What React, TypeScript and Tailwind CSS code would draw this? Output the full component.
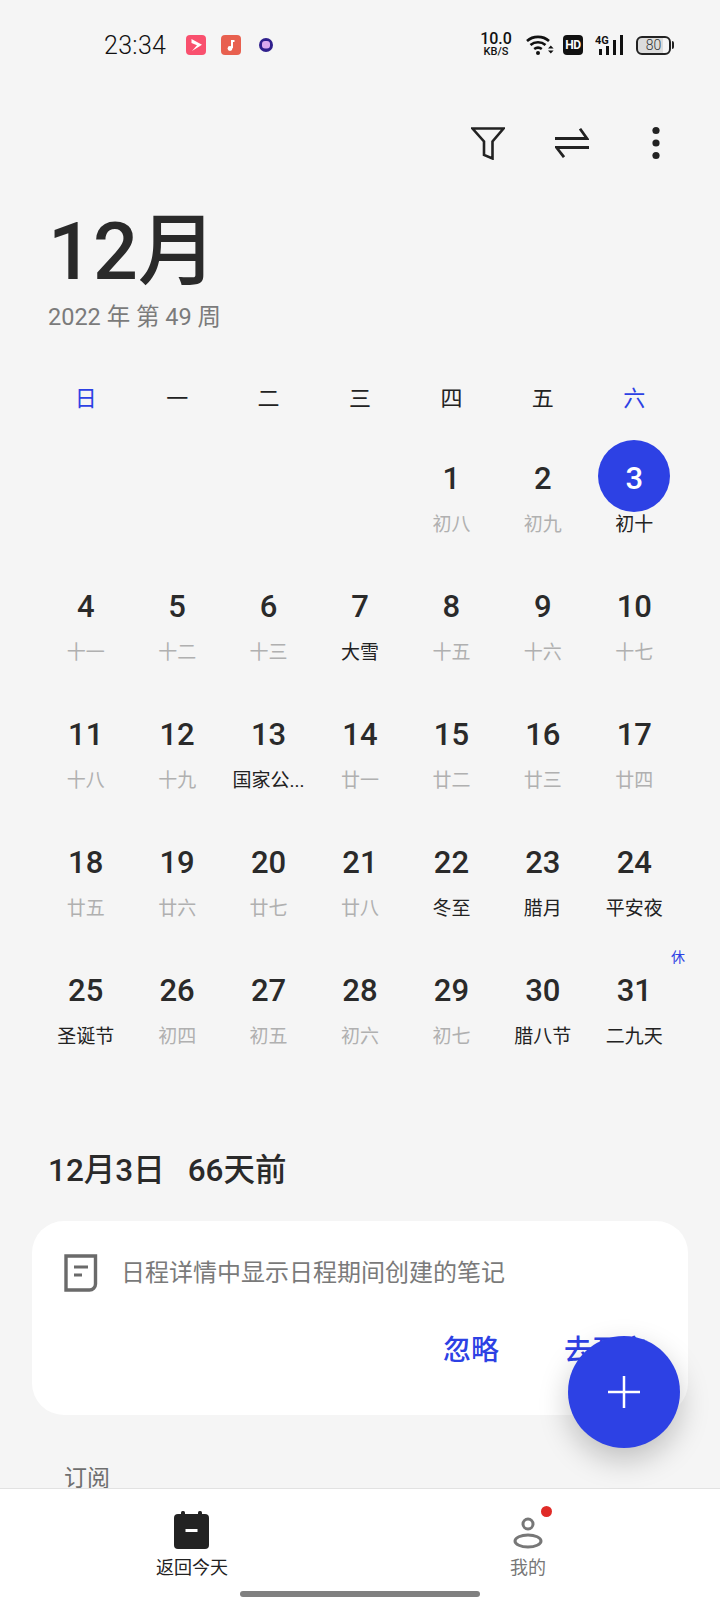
const font = "font-['Roboto','Noto_Sans_CJK_SC',sans-serif]";

const weekDays = ["日", "一", "二", "三", "四", "五", "六"];

type Day = { n: number; lunar: string; mark?: boolean };

const days: Day[] = [
  { n: 1, lunar: "初八" },
  { n: 2, lunar: "初九" },
  { n: 3, lunar: "初十", mark: true },
  { n: 4, lunar: "十一" },
  { n: 5, lunar: "十二" },
  { n: 6, lunar: "十三" },
  { n: 7, lunar: "大雪", mark: true },
  { n: 8, lunar: "十五" },
  { n: 9, lunar: "十六" },
  { n: 10, lunar: "十七" },
  { n: 11, lunar: "十八" },
  { n: 12, lunar: "十九" },
  { n: 13, lunar: "国家公...", mark: true },
  { n: 14, lunar: "廿一" },
  { n: 15, lunar: "廿二" },
  { n: 16, lunar: "廿三" },
  { n: 17, lunar: "廿四" },
  { n: 18, lunar: "廿五" },
  { n: 19, lunar: "廿六" },
  { n: 20, lunar: "廿七" },
  { n: 21, lunar: "廿八" },
  { n: 22, lunar: "冬至", mark: true },
  { n: 23, lunar: "腊月", mark: true },
  { n: 24, lunar: "平安夜", mark: true },
  { n: 25, lunar: "圣诞节", mark: true },
  { n: 26, lunar: "初四" },
  { n: 27, lunar: "初五" },
  { n: 28, lunar: "初六" },
  { n: 29, lunar: "初七" },
  { n: 30, lunar: "腊八节", mark: true },
  { n: 31, lunar: "二九天", mark: true },
];

function StatusBar() {
  return (
    <div className="flex h-[90px] items-center pl-[104px] pr-[46px] text-[#111]">
      <span className="w-[62px] text-[25px] font-light leading-none tracking-[0.3px] font-['Roboto',sans-serif]">23:34</span>
      <div className="ml-[20px] flex items-center gap-[15px]">
        <svg width="20" height="20" viewBox="0 0 20 20">
          <rect width="20" height="20" rx="4" fill="#f9506e" />
          <path d="M5.500 4 16 9.800 6 16 11 10.200 5.500 8Z" fill="#fff" />
        </svg>
        <svg width="20" height="20" viewBox="0 0 20 20">
          <rect width="20" height="20" rx="4" fill="#e8604f" />
          <path d="M11 5v8" stroke="#fff" strokeWidth="2" />
          <path d="M11 5h2.500v2H11z" fill="#fff" />
          <circle cx="9" cy="13.500" r="2.400" fill="#fff" />
        </svg>
        <svg width="20" height="20" viewBox="0 0 20 20">
          <circle cx="10" cy="10" r="7" fill="#2f1f8c" />
          <rect x="6" y="6" width="8" height="7.500" rx="3" fill="#dba8ee" />
        </svg>
      </div>
      <div className="ml-auto flex items-center">
        <div className="flex w-[32px] flex-col items-center font-['Roboto',sans-serif] font-medium">
          <span className="text-[16px] leading-[14px]">10.0</span>
          <span className="text-[11px] leading-[12px]">KB/S</span>
        </div>
        <svg className="ml-[14px]" width="28" height="22" viewBox="0 0 28 22" fill="none" stroke="#111" strokeWidth="2.600">
          <path d="M1 7C7 1.500 17 1.500 23 7" />
          <path d="M4.500 11c4.200-3.600 10.800-3.600 15 0" />
          <path d="M8.200 15c2.200-1.600 5.400-1.600 7.600 0" />
          <circle cx="12" cy="19" r="2" fill="#111" stroke="none" />
          <path d="M22 14.500l2.800-3 2.800 3zM22 16.500l2.800 3 2.800-3z" fill="#111" stroke="none" />
        </svg>
        <div className="ml-[9px] flex h-[20px] w-[20px] items-center justify-center rounded-[4px] bg-[#111] text-[12px] font-bold leading-none tracking-[-0.5px] text-white font-['Roboto',sans-serif]">
          HD
        </div>
        <svg className="ml-[12px]" width="30" height="22" viewBox="0 0 30 22">
          <text x="0" y="10" fontSize="11" fontWeight="700" fontFamily="Roboto" fill="#111">4G</text>
          <rect x="4" y="15" width="3" height="6" fill="#111" />
          <rect x="11" y="12" width="3" height="9" fill="#111" />
          <rect x="18" y="6" width="3" height="15" fill="#111" />
          <rect x="25" y="1" width="3" height="20" fill="#111" />
        </svg>
        <div className="ml-[11px] flex items-center">
          <div className="relative flex h-[19px] w-[35px] items-center justify-center overflow-hidden rounded-[6px] border-2 border-[#222] bg-[linear-gradient(90deg,#dcdcdc_80%,#f5f5f5_80%)] text-[14px] font-light leading-none text-[#333] font-['Roboto',sans-serif]">
            80
          </div>
          <div className="ml-[1px] h-[8px] w-[2px] rounded-r-sm bg-[#222]" />
        </div>
      </div>
    </div>
  );
}

function Toolbar() {
  return (
    <div className="mt-[27px] flex h-[52px] items-center justify-end gap-[50px] pr-[59px] text-[#222]">
      <svg width="34" height="33" viewBox="0 0 34 33" fill="none" stroke="currentColor" strokeWidth="2.600">
        <path d="M1.500 1.500H32.500L21.500 14.500V31.500L13 28V14.500Z" />
      </svg>
      <svg width="34" height="30" viewBox="0 0 34 30" fill="none" stroke="currentColor" strokeWidth="2.800">
        <path d="M0 10.500H32L25 0.800" />
        <path d="M34 19.500H1.500L9 29.200" />
      </svg>
      <svg className="ml-[12px]" width="10" height="36" viewBox="0 0 10 36" fill="currentColor">
        <circle cx="5" cy="5.500" r="3.600" />
        <circle cx="5" cy="18" r="3.600" />
        <circle cx="5" cy="30.500" r="3.600" />
      </svg>
    </div>
  );
}

function Calendar() {
  return (
    <div className="mt-[48px] grid grid-cols-7 px-[40px]">
      {weekDays.map((d, i) => (
        <div
          key={d}
          className={`flex h-[37px] items-center justify-center text-[22px] leading-none ${
            i === 0 || i === 6 ? "text-[#2d41e4]" : "text-[#222]"
          }`}
        >
          {d}
        </div>
      ))}
      {[0, 1, 2, 3].map((i) => (
        <div key={i} />
      ))}
      {days.map((d) => (
        <div key={d.n} className="relative flex h-[128px] flex-col items-center pt-[23px]">
          {d.n === 3 && (
            <div className="absolute left-1/2 top-[23px] h-[72px] w-[72px] -translate-x-1/2 rounded-full bg-[#2d41e4]" />
          )}
          {d.n === 31 && (
            <span className="absolute right-[-5px] top-[21px] text-[14px] leading-none text-[#2d41e4]">休</span>
          )}
          <span
            className={`relative mt-[23px] text-[31px] font-medium leading-[32px] ${
              d.n === 3 ? "text-white" : "text-[#2a2a2a]"
            }`}
          >
            {d.n}
          </span>
          <span
            className={`relative mt-[20px] whitespace-nowrap text-[19px] leading-[20px] ${
              d.mark ? "text-[#222]" : "text-[#b0b0b0]"
            }`}
          >
            {d.lunar}
          </span>
        </div>
      ))}
    </div>
  );
}

function NoteCard() {
  return (
    <div className="mx-[32px] mt-[30px] h-[194px] rounded-[32px] bg-white">
      <div className="flex items-center pl-[32px] pt-[33px]">
        <svg width="34" height="38" viewBox="0 0 34 38" fill="none" stroke="#6a6a6a" strokeWidth="3.400">
          <path d="M2 2H31.500V30a6 6 0 0 1-6 6H2Z" />
          <path d="M10 13h14M10 21h8" strokeWidth="2.800" />
        </svg>
        <span className="ml-[23px] text-[24px] leading-none text-[#7a7a7a]">日程详情中显示日程期间创建的笔记</span>
      </div>
      <div className="mt-[45px] flex justify-end gap-[65px] pr-[40px] text-[28px] font-medium leading-none text-[#2d41e4]">
        <span>忽略</span>
        <span>去开启</span>
      </div>
    </div>
  );
}

export default function App() {
  return (
    <div className={`relative flex h-[1600px] w-[720px] flex-col overflow-hidden bg-[#f5f5f5] ${font}`}>
      <div className="min-h-0 flex-1 overflow-hidden">
        <StatusBar />
        <Toolbar />
        <div className="px-[48px] pt-[35px]">
          <div className="text-[79px] font-medium leading-[96px] text-[#2a2a2a]">12月</div>
          <div className="mt-[2px] text-[23.500px] leading-[30px] text-[#7b7b7b]">2022 年 第 49 周</div>
        </div>
        <Calendar />
        <div className="mt-[94px] flex gap-[23px] px-[48px] text-[31.500px] font-medium leading-[40px] text-[#2a2a2a]">
          <span>12月3日</span>
          <span>66天前</span>
        </div>
        <NoteCard />
        <div className="mt-[52px] pl-[64px] text-[23px] leading-none text-[#6f6f6f]">订阅</div>
      </div>

      <div className="relative flex h-[112px] shrink-0 border-t border-[#e2e2e2] bg-white">
        <div className="flex w-[384px] flex-col items-center pt-[22px]">
          <svg width="36" height="38" viewBox="0 0 36 38">
            <rect x="0" y="3" width="35" height="35" rx="4" fill="#222" />
            <rect x="7" y="0" width="4" height="6" rx="1.500" fill="#222" />
            <rect x="24" y="0" width="4" height="6" rx="1.500" fill="#222" />
            <rect x="11.500" y="18" width="12" height="3" fill="#fff" />
          </svg>
          <span className="mt-[6px] text-[18px] leading-[26px] text-[#222]">返回今天</span>
        </div>
        <div className="relative flex w-[288px] flex-col items-center pt-[28px]">
          <svg width="30" height="32" viewBox="0 0 30 32" fill="none" stroke="#777" strokeWidth="3">
            <circle cx="15" cy="7" r="5" />
            <ellipse cx="15" cy="24" rx="13" ry="6" />
          </svg>
          <span className="absolute left-[157px] top-[17px] h-[11px] w-[11px] rounded-full bg-[#e02b27]" />
          <span className="mt-[6px] text-[18px] leading-[26px] text-[#777]">我的</span>
        </div>
        <div className="absolute bottom-[3px] left-[240px] h-[6px] w-[240px] rounded-full bg-[#808080]" />
      </div>

      <button className="absolute left-[568px] top-[1336px] flex h-[112px] w-[112px] items-center justify-center rounded-full bg-[#2d41e4] shadow-[0_12px_30px_rgba(0,0,0,0.22)]">
        <svg width="34" height="34" viewBox="0 0 34 34" stroke="#fff" strokeWidth="2.500">
          <path d="M17 1V33M1 17H33" />
        </svg>
      </button>
    </div>
  );
}
